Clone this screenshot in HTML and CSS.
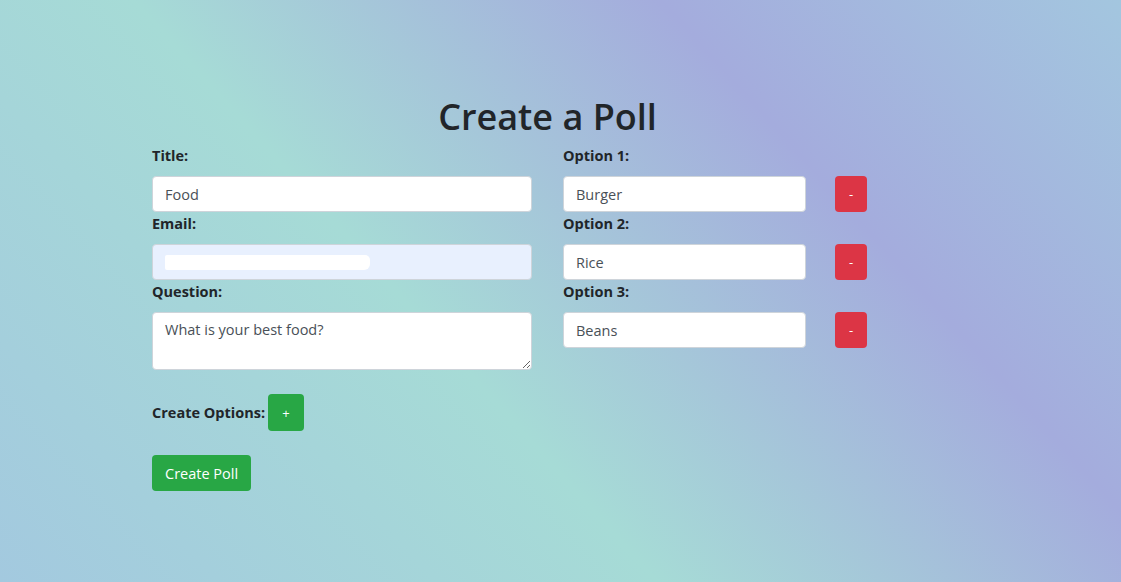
FILE: index.html
```html
<!DOCTYPE html>
<html lang="en">
<head>
<meta charset="utf-8">
<title>Create a Poll</title>
<link rel="stylesheet" href="styles.css">
</head>
<body>
<div class="page">
  <h1 class="title">Create a Poll</h1>
  <form class="poll">
    <div class="cols">
      <div class="col col-left">
        <label class="lbl">Title:</label>
        <input class="field" type="text" value="Food">
        <label class="lbl">Email:</label>
        <div class="email-wrap">
          <input class="field autofill" type="text" value="">
          <span class="redact"></span>
        </div>
        <label class="lbl">Question:</label>
        <textarea class="field area">What is your best food?</textarea>
      </div>
      <div class="col col-right">
        <label class="lbl">Option 1:</label>
        <div class="opt-row"><input class="field opt" type="text" value="Burger"><button type="button" class="btn btn-red">-</button></div>
        <label class="lbl">Option 2:</label>
        <div class="opt-row"><input class="field opt" type="text" value="Rice"><button type="button" class="btn btn-red">-</button></div>
        <label class="lbl">Option 3:</label>
        <div class="opt-row"><input class="field opt" type="text" value="Beans"><button type="button" class="btn btn-red">-</button></div>
      </div>
    </div>
    <div class="create-opts">
      <span class="lbl inline">Create Options:</span>
      <button type="button" class="btn btn-green plus">+</button>
    </div>
    <button type="button" class="btn btn-green submit">Create Poll</button>
  </form>
</div>
</body>
</html>
```

FILE: styles.css
```css
html, body {
  margin: 0;
  padding: 0;
}
body {
  min-height: 100vh;
  font-family: "Open Sans", "Noto Sans", "Liberation Sans", sans-serif;
  color: #212529;
  background: linear-gradient(48deg, #a3c9df 0%, #a6dbd6 40%, #a4acdd 72%, #a3c6df 100%);
  background-attachment: fixed;
}
.page {
  width: 791px;
  margin-left: 152px;
  padding-top: 91px;
}
.title {
  margin: 0 0 1px 0;
  text-align: center;
  font-size: 36px;
  font-weight: 600;
  line-height: 52px;
  color: #212529;
}
.cols {
  display: flex;
  gap: 31px;
}
.col {
  display: flex;
  flex-direction: column;
}
.col-left { width: 380px; }
.col-right { width: 304px; }
.lbl {
  display: block;
  font-size: 14.5px;
  font-weight: 700;
  line-height: 24px;
  margin-bottom: 8px;
  color: #212529;
}
.lbl.inline {
  display: inline-block;
  margin: 0;
}
.field {
  box-sizing: border-box;
  display: block;
  width: 100%;
  height: 36px;
  margin: 0;
  padding: 5px 12px;
  font-family: inherit;
  font-size: 14.5px;
  color: #495057;
  background: #fff;
  border: 1px solid #ced4da;
  border-radius: 4px;
  outline: none;
}
.autofill {
  background: #e8f0fe;
}
.email-wrap {
  position: relative;
}
.redact {
  position: absolute;
  left: 13px;
  top: 11px;
  width: 205px;
  height: 15px;
  background: #fff;
  border-radius: 2px 5px 6px 2px;
}
.area {
  height: 58px;
  padding-top: 7px;
  resize: vertical;
  line-height: 20px;
}
.opt-row {
  display: flex;
  align-items: flex-start;
  gap: 29px;
}
.opt {
  width: 243px;
  flex: none;
}
.btn {
  box-sizing: border-box;
  border: none;
  border-radius: 4px;
  color: #fff;
  font-family: inherit;
  cursor: pointer;
}
.btn-red {
  width: 32px;
  height: 36px;
  padding: 0;
  background: #dc3545;
  font-size: 13px;
}
.btn-green {
  background: #28a745;
}
.create-opts {
  display: flex;
  align-items: center;
  gap: 3px;
  margin-top: 24px;
}
.plus {
  width: 36px;
  height: 37px;
  padding: 0;
  font-size: 13px;
}
.submit {
  display: block;
  margin-top: 24px;
  height: 36px;
  padding: 0 13px;
  font-size: 14.5px;
}
```
